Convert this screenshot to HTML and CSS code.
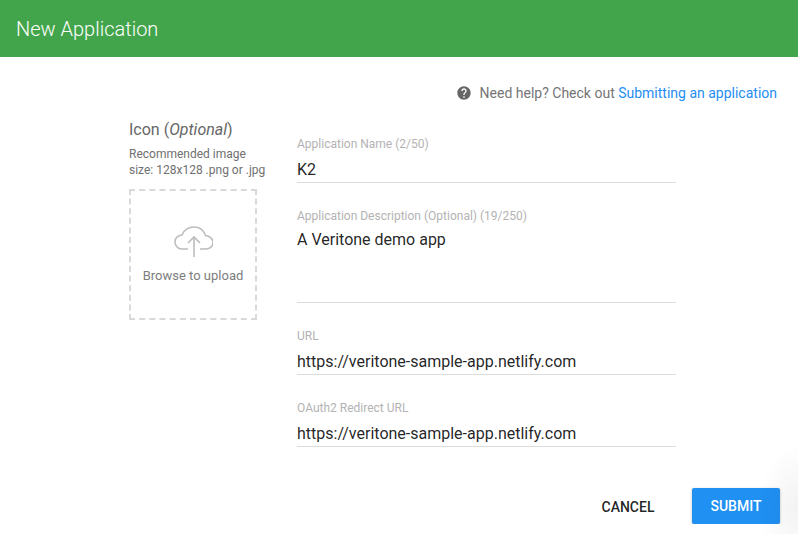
FILE: index.html
```html
<!DOCTYPE html>
<html lang="en">
<head>
  <meta charset="UTF-8" />
  <meta name="viewport" content="width=device-width, initial-scale=1.0"/>
  <title>New Application</title>
  <link rel="stylesheet" href="styles.css">
</head>
<body>

  <!-- Header -->
  <header class="app-bar">
    <h1>New Application</h1>
  </header>

  <!-- Help line -->
  <div class="help">
    <svg class="help-icon" viewBox="0 0 24 24" width="16" height="16">
      <path d="M12 2C6.48 2 2 6.48 2 12s4.48 10 10 10 10-4.48 10-10S17.52 2 12 2zm1 17h-2v-2h2v2zm2.07-7.75l-.9.92C13.45 12.9 13 13.5 13 15h-2v-.5c0-1.1.45-2.1 1.17-2.83l1.24-1.26c.37-.36.59-.86.59-1.41 0-1.1-.9-2-2-2s-2 .9-2 2H8c0-2.21 1.79-4 4-4s4 1.79 4 4c0 .88-.36 1.68-.93 2.25z"/>
    </svg>
    <span>Need help? Check out <a href="#">Submitting an application</a></span>
  </div>

  <!-- Main Content -->
  <div class="container">

    <!-- Icon upload -->
    <section class="icon-col">
      <h2>Icon (<em>Optional</em>)</h2>
      <p class="hint">Recommended image<br>size: 128x128 .png or .jpg</p>
      <div class="dropzone">
        <svg class="cloud" viewBox="-1 0 40 32" width="40" height="32">
          <path d="M14 23H8C4 23 1 20 1 16C1 12 4 9.500 8 9C10 4 14 1 20 1C26 1 30 5 31.500 9.500C36 10 39 13 39 16.500C39 20 36 23 32 23H26"/>
          <path d="M20 31V11M14 17L20 11L26 17"/>
        </svg>
        <span>Browse to upload</span>
      </div>
    </section>

    <!-- Form fields -->
    <section class="fields">
      <div class="field">
        <label>Application Name (2/50)</label>
        <div class="value">K2</div>
      </div>
      <div class="field">
        <label>Application Description (Optional) (19/250)</label>
        <div class="value value-multi">A Veritone demo app</div>
      </div>
      <div class="field">
        <label>URL</label>
        <div class="value">https://veritone-sample-app.netlify.com</div>
      </div>
      <div class="field">
        <label>OAuth2 Redirect URL</label>
        <div class="value">https://veritone-sample-app.netlify.com</div>
      </div>
    </section>

  </div>

  <!-- Actions -->
  <div class="actions">
    <button class="btn btn-cancel">CANCEL</button>
    <button class="btn btn-submit">SUBMIT</button>
  </div>

</body>
</html>
```

FILE: styles.css
```css
/* General Styling */
body {
  font-family: Roboto, Arial, sans-serif;
  margin: 0;
  padding: 0;
  background: #fff;
  overflow: hidden;
}

/* Faint shadow coming in from the right edge */
body::after {
  content: "";
  position: fixed;
  right: 0;
  bottom: 0;
  width: 40px;
  height: 90px;
  background: radial-gradient(ellipse at 100% 70%, rgba(0, 0, 0, 0.05), transparent 70%);
  pointer-events: none;
}

.app-bar {
  background: #43a54b;
  height: 57px;
  padding: 0 16px;
  display: flex;
  align-items: center;
}

.app-bar h1 {
  margin: 0;
  color: #fff;
  font-size: 20px;
  font-weight: 300;
}

/* Help line */
.help {
  display: flex;
  align-items: center;
  justify-content: flex-end;
  gap: 8px;
  padding: 28px 21px 0 0;
  height: 16px;
  font-size: 14px;
  color: #757575;
}

.help-icon {
  fill: #666;
}

.help a {
  color: #1e8ef3;
  text-decoration: none;
}

/* Main layout */
.container {
  display: flex;
  gap: 40px;
  padding: 20px 0 0 129px;
}

.icon-col {
  width: 128px;
}

.icon-col h2 {
  margin: 1px 0 0;
  font-size: 16px;
  font-weight: 400;
  line-height: 16px;
  color: #666;
}

.hint {
  margin: 8px 0 0;
  font-size: 12px;
  line-height: 16px;
  color: #707070;
  white-space: nowrap;
}

.dropzone {
  box-sizing: border-box;
  height: 131px;
  margin-top: 11px;
  border: 2px dashed #d9d9d9;
  display: flex;
  flex-direction: column;
  align-items: center;
  color: #7d7d7d;
  font-size: 13px;
}

.cloud {
  margin-top: 35px;
  margin-bottom: 10px;
  fill: none;
  stroke: #bdbdbd;
  stroke-width: 1.6;
}

/* Fields */
.fields {
  width: 379px;
  padding-top: 16px;
}

.field {
  margin-bottom: 26px;
}

.field label {
  display: block;
  font-size: 12px;
  line-height: 14px;
  color: #b3b3b3;
}

.value {
  margin-top: 8px;
  height: 23px;
  line-height: 22px;
  font-size: 16px;
  color: rgba(0, 0, 0, 0.87);
  border-bottom: 1px solid #dcdcdc;
}

.value-multi {
  margin-top: 6px;
  height: 73px;
}

/* Buttons */
.actions {
  display: flex;
  justify-content: flex-end;
  align-items: center;
  gap: 20px;
  padding: 15px 18px 0 0;
}

.btn {
  font-family: inherit;
  font-size: 14px;
  font-weight: 500;
  height: 36px;
  border: none;
  border-radius: 2px;
  cursor: pointer;
}

.btn-cancel {
  width: 88px;
  padding-top: 2px;
  background: none;
  color: rgba(0, 0, 0, 0.87);
}

.btn-submit {
  width: 88px;
  background: #2090f3;
  color: #fff;
  box-shadow: 0 1px 3px rgba(0, 0, 0, 0.25);
}
```
